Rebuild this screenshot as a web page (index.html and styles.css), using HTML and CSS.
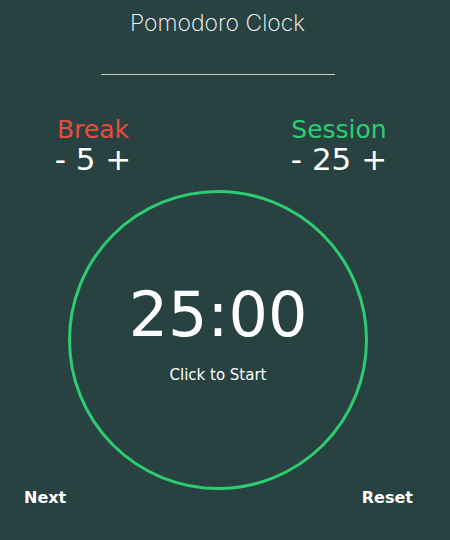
FILE: index.html
```html
<!DOCTYPE html>
<html>
<head>
<meta charset="utf-8">
<link rel="stylesheet" href="styles.css">
</head>
<body>
<div class="app">
  <h1 class="title">Pomodoro Clock</h1>
  <hr class="rule">
  <div class="settings">
    <div class="setting">
      <div class="label label-break">Break</div>
      <div class="control"><span>-</span> <span>5</span> <span>+</span></div>
    </div>
    <div class="setting">
      <div class="label label-session">Session</div>
      <div class="control"><span>-</span> <span>25</span> <span>+</span></div>
    </div>
  </div>
  <div class="clock-wrap">
    <div class="clock">
      <div class="time">25:00</div>
      <div class="hint">Click to Start</div>
    </div>
  </div>
  <div class="footer">
    <span class="btn">Next</span>
    <span class="btn">Reset</span>
  </div>
</div>
</body>
</html>
```
FILE: styles.css
```css
html, body {
  margin: 0;
  padding: 0;
  background: #274241;
}
.app {
  width: 450px;
  height: 540px;
  font-family: "DejaVu Sans", Verdana, sans-serif;
  color: #fff;
}
.title {
  margin: 0;
  padding: 8px 15px 0 0;
  font-family: Inter, "Open Sans", sans-serif;
  font-weight: 200;
  font-size: 23px;
  line-height: 30px;
  text-align: center;
  color: #fff;
}
.rule {
  width: 234px;
  margin: 36px 0 0 101px;
  border: 0;
  border-top: 1px solid #c8cfcd;
  height: 0;
}
.settings {
  display: flex;
  justify-content: space-between;
  padding: 0 41px 0 23px;
  margin-top: 41px;
}
.setting {
  width: 140px;
  text-align: center;
}
.label {
  font-size: 25px;
  line-height: 28px;
}
.label-break { color: #e74c3c; }
.label-session { color: #2ecc71; }
.control {
  font-size: 31px;
  line-height: 30px;
  white-space: pre;
}
.clock-wrap {
  padding-left: 68px;
  margin-top: 16px;
}
.clock {
  width: 294px;
  height: 294px;
  border: 3px solid #2ecc71;
  border-radius: 50%;
  display: flex;
  flex-direction: column;
  align-items: center;
}
.time {
  margin-top: 87px;
  font-size: 62px;
  line-height: 70px;
}
.hint {
  margin-top: 16px;
  font-size: 15px;
  line-height: 18px;
}
.footer {
  display: flex;
  justify-content: space-between;
  padding: 0 37px 0 24px;
  margin-top: -2px;
}
.btn {
  font-weight: bold;
  font-size: 16px;
  line-height: 20px;
}
```
